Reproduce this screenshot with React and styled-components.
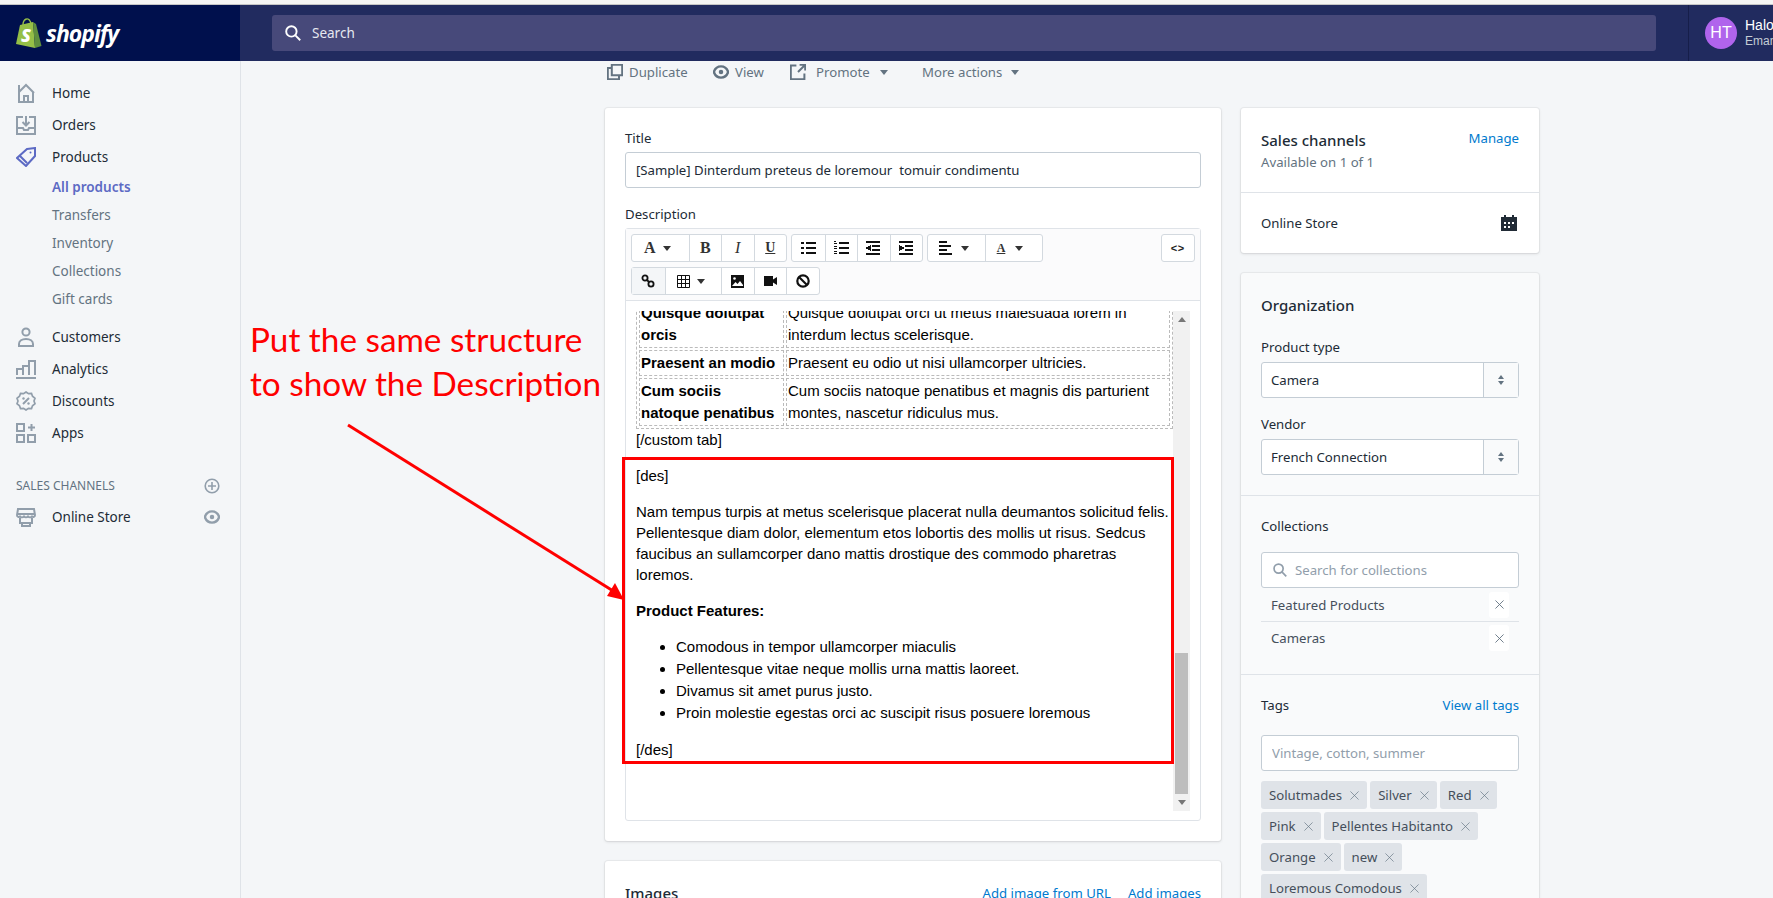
import React from "react";
import styled, { createGlobalStyle } from "styled-components";

const GlobalStyle = createGlobalStyle`
  html, body {
    margin: 0;
    padding: 0;
    height: 898px;
    overflow: hidden;
    background: #f4f6f8;
  }
  * { box-sizing: border-box; }
`;

const UI_FONT = `"Noto Sans", "Open Sans", sans-serif`;
const DOC_FONT = `"Liberation Sans", Arial, sans-serif`;

const Page = styled.div`
  position: relative;
  width: 1773px;
  height: 898px;
  overflow: hidden;
  font-family: ${UI_FONT};
  font-size: 13.5px;
  line-height: 20px;
  color: #212b36;
  background: #f4f6f8;
`;

const BrowserEdge = styled.div`
  height: 5px;
  background: #f5f5f5;
  border-bottom: 1px solid #c6c6c6;
`;

const TopBar = styled.header`
  display: flex;
  height: 56px;
  background: #212b5f;
`;

const LogoArea = styled.div`
  display: flex;
  flex: none;
  align-items: center;
  width: 240px;
  padding-left: 15px;
  background: #00104d;
`;

const Wordmark = styled.span`
  margin-left: 4px;
  font-family: "Open Sans", sans-serif;
  font-size: 23px;
  font-weight: 700;
  font-style: italic;
  letter-spacing: -1px;
  color: #fff;
`;

const SearchWrap = styled.div`
  display: flex;
  flex: none;
  align-items: center;
  gap: 11px;
  width: 1384px;
  height: 36px;
  margin: 10px 0 0 32px;
  padding-left: 13px;
  border-radius: 3px;
  background: #47497a;
  color: #e6e8f0;
`;

const SearchLabel = styled.span`
  font-size: 13.5px;
`;

const Account = styled.div`
  display: flex;
  flex: none;
  align-items: center;
  gap: 8px;
  margin-left: 32px;
  padding-left: 16px;
  border-left: 1px solid #161e4a;
  white-space: nowrap;
  font-family: ${DOC_FONT};
`;

const Avatar = styled.div`
  display: flex;
  align-items: center;
  justify-content: center;
  flex: none;
  width: 32px;
  height: 32px;
  border-radius: 50%;
  background: #b064ec;
  color: #fff;
  font-size: 16px;
`;

const AccountName = styled.div`
  font-size: 14px;
  line-height: 16px;
  color: #fff;
`;

const AccountShop = styled.div`
  font-size: 12px;
  line-height: 16px;
  color: #c4cdd5;
`;

const Body = styled.div`
  display: flex;
  height: 837px;
`;

const Sidebar = styled.nav`
  flex: none;
  width: 241px;
  padding-top: 16px;
  border-right: 1px solid #dfe3e8;
`;

const NavItem = styled.div`
  display: flex;
  align-items: center;
  gap: 16px;
  height: 32px;
  padding: 0 20px 0 16px;
  color: ${(p) => p.$color || "#212b36"};
`;

const NavLabel = styled.span`
  flex: 1;
  color: #212b36;
`;

const SubItem = styled.div`
  display: flex;
  align-items: center;
  height: 28px;
  padding-left: 52px;
  color: ${(p) => (p.$active ? "#5c6ac4" : "#637381")};
  font-weight: ${(p) => (p.$active ? 600 : 400)};
`;

const SubList = styled.div`
  padding-bottom: 8px;
`;

const NavHeading = styled.div`
  display: flex;
  align-items: center;
  justify-content: space-between;
  height: 24px;
  margin: 25px 0 3px;
  padding: 0 20px 0 16px;
  font-size: 12px;
  color: #637381;
  text-transform: uppercase;
`;

const Main = styled.main`
  flex: 1;
  padding-left: 364px;
  overflow: hidden;
  font-size: 13.2px;
`;

const Actions = styled.div`
  display: flex;
  align-items: center;
  height: 22px;
  margin: 0 0 25px 2px;
`;

const ActionItem = styled.span`
  display: inline-flex;
  align-items: center;
  gap: ${(p) => p.$gap || 6}px;
  width: ${(p) => p.$width}px;
  color: #637381;
`;

const Caret = styled.span`
  display: inline-block;
  width: 0;
  height: 0;
  margin-left: ${(p) => p.$gap ?? 6}px;
  border-left: 4.5px solid transparent;
  border-right: 4.5px solid transparent;
  border-top: 5px solid ${(p) => p.$color || "#637381"};
`;

const Columns = styled.div`
  display: flex;
  align-items: flex-start;
  gap: 20px;
`;

const LeftColumn = styled.div`
  display: flex;
  flex-direction: column;
  gap: 20px;
  width: 616px;
`;

const RightColumn = styled.div`
  display: flex;
  flex-direction: column;
  gap: 20px;
  width: 298px;
`;

const Card = styled.section`
  border-radius: 3px;
  background: ${(p) => (p.$tint ? "#f9fafb" : "#fff")};
  box-shadow: 0 0 0 1px rgba(63, 63, 68, 0.05), 0 1px 3px 0 rgba(63, 63, 68, 0.15);
`;

const CardSection = styled.div`
  padding: ${(p) => p.$padding || "20px"};
  & + & {
    border-top: 1px solid #dfe3e8;
  }
`;

const CardHead = styled.div`
  display: flex;
  align-items: ${(p) => p.$align || "center"};
  justify-content: space-between;
`;

const CardTitle = styled.h2`
  margin: 0;
  font-size: 15px;
  font-weight: 500;
  line-height: 24px;
  color: #212b36;
`;

const Muted = styled.div`
  line-height: 20px;
  color: #637381;
`;

const Link = styled.a`
  line-height: 20px;
  color: #007ace;
  margin-left: ${(p) => p.$gap || 0}px;
`;

const Label = styled.div`
  margin-top: ${(p) => p.$top || 0}px;
  margin-bottom: ${(p) => p.$gap ?? 4}px;
  line-height: 20px;
`;

const Input = styled.input`
  display: block;
  width: 100%;
  height: 36px;
  padding: 0 10px;
  border: 1px solid #c4cdd5;
  border-radius: 3px;
  background: #fff;
  font: inherit;
  color: #212b36;
  margin-top: ${(p) => p.$top || 0}px;
  margin-bottom: ${(p) => p.$gap || 0}px;
  &::placeholder {
    color: #919eab;
    opacity: 1;
  }
`;

const Editor = styled.div`
  border: 1px solid #dfe3e8;
  border-radius: 3px;
`;

const Toolbar = styled.div`
  display: flex;
  flex-direction: column;
  gap: 5px;
  padding: 5px;
  border-bottom: 1px solid #dfe3e8;
  background: #fbfbfc;
`;

const ToolRow = styled.div`
  display: flex;
  gap: 4px;
`;

const ToolGroup = styled.div`
  display: flex;
  border: 1px solid #d3d9df;
  border-radius: 3px;
  background: #fff;
  margin-left: ${(p) => (p.$end ? "auto" : 0)};
`;

const ToolButton = styled.div`
  display: flex;
  align-items: center;
  justify-content: center;
  gap: 7px;
  width: ${(p) => p.$width || 32.5}px;
  height: 26px;
  padding-right: ${(p) => p.$nudge || 0}px;
  color: #000;
  background: ${(p) => (p.$on ? "#f4f6f8" : "transparent")};
  & + & {
    border-left: 1px solid #d3d9df;
  }
`;

const SerifGlyph = styled.span`
  font-family: "Liberation Serif", serif;
  font-size: ${(p) => p.$size || 15}px;
  font-weight: ${(p) => (p.$light ? 400 : 700)};
  font-style: ${(p) => (p.$italic ? "italic" : "normal")};
  text-decoration: ${(p) => (p.$under ? "underline" : "none")};
  color: #333;
`;

const CodeGlyph = styled.span`
  font-family: ${DOC_FONT};
  font-size: 11px;
  font-weight: 700;
  letter-spacing: 0.5px;
  color: #222;
`;

const EditorFrame = styled.div`
  display: flex;
  height: 519px;
  padding: 10px 10px 9px;
`;

const Scroller = styled.div`
  flex: 1;
  overflow: hidden;
  font-family: ${DOC_FONT};
  font-size: 15px;
  line-height: 21px;
  color: #000;
`;

const ScrollContent = styled.div`
  margin-top: -14px;
`;

const DocTable = styled.table`
  width: 537px;
  border: 1px dashed #bbb;
  border-spacing: 2px;
  line-height: 22px;
  td {
    padding: 1px;
    border: 1px dashed #bbb;
    vertical-align: top;
  }
  td:first-child {
    width: 145px;
    font-weight: 700;
  }
`;

const DocText = styled.p`
  margin: 15px 0;
  &:last-child {
    margin-bottom: 0;
  }
`;

const DocList = styled.ul`
  margin: 15px 0;
  padding-left: 40px;
  line-height: 22px;
`;

const Scrollbar = styled.div`
  display: flex;
  flex: none;
  flex-direction: column;
  align-items: center;
  justify-content: space-between;
  width: 17px;
  background: #f1f1f1;
`;

const ScrollArrow = styled.div`
  display: flex;
  align-items: center;
  justify-content: center;
  height: 17px;
  &::before {
    content: "";
    border-left: 4px solid transparent;
    border-right: 4px solid transparent;
    ${(p) => (p.$down ? "border-top" : "border-bottom")}: 5px solid #777;
  }
`;

const ScrollBottom = styled.div`
  width: 100%;
`;

const ScrollThumb = styled.div`
  width: 13px;
  height: 141px;
  margin: 0 auto;
  background: #bdbdbd;
`;

const SelectBox = styled.div`
  display: flex;
  align-items: center;
  height: 36px;
  margin-bottom: ${(p) => p.$gap || 0}px;
  border: 1px solid #c4cdd5;
  border-radius: 3px;
  background: #fff;
`;

const SelectValue = styled.span`
  flex: 1;
  padding-left: 9px;
`;

const SelectHandle = styled.span`
  display: flex;
  flex-direction: column;
  align-items: center;
  justify-content: center;
  gap: 2px;
  width: 35px;
  height: 100%;
  border-left: 1px solid #c4cdd5;
  background: #f9fafb;
  &::before,
  &::after {
    content: "";
    border-left: 3px solid transparent;
    border-right: 3px solid transparent;
  }
  &::before {
    border-bottom: 4px solid #637381;
  }
  &::after {
    border-top: 4px solid #637381;
  }
`;

const SearchField = styled.div`
  display: flex;
  align-items: center;
  gap: 8px;
  height: 36px;
  padding-left: 11px;
  border: 1px solid #c4cdd5;
  border-radius: 3px;
  background: #fff;
  color: #919eab;
`;

const CollectionRow = styled.div`
  display: flex;
  align-items: center;
  justify-content: space-between;
  height: 33px;
  padding: 0 10px;
  color: #454f5b;
  & + & {
    border-top: 1px solid #dfe3e8;
  }
`;

const CollectionRemove = styled.span`
  display: flex;
  align-items: center;
  justify-content: center;
  width: 20px;
  height: 26px;
  border-radius: 3px;
  background: #fff;
  color: #637381;
`;

const TagWrap = styled.div`
  display: flex;
  flex-wrap: wrap;
  gap: 3px;
`;

const Tag = styled.span`
  display: inline-flex;
  align-items: center;
  gap: 8px;
  height: 28px;
  padding: 0 8px;
  border-radius: 3px;
  background: #dfe3e8;
  color: #454f5b;
`;

const Note = styled.div`
  position: absolute;
  left: 250px;
  top: 318px;
  font-family: Lato, sans-serif;
  font-size: 33.3px;
  line-height: 43.5px;
  color: #f00;
  white-space: nowrap;
`;

const RedBox = styled.div`
  position: absolute;
  left: 622px;
  top: 457px;
  width: 552px;
  height: 307px;
  border: 3px solid #f00;
`;

const ArrowLayer = styled.svg`
  position: absolute;
  left: 340px;
  top: 420px;
`;

const Icon = styled.svg.attrs((p) => ({
  viewBox: "0 0 20 20",
  width: p.$size || 20,
  height: p.$size || 20,
  fill: "none",
  stroke: "currentColor",
  strokeWidth: p.$stroke || 2,
}))`
  flex: none;
  display: block;
  color: ${(p) => p.$color || "#919eab"};
`;

const ShopifyBag = () => (
  <svg width="27" height="31" viewBox="0 0 27 31">
    <path d="M1 26 L5 7 L18 4 L20 30 Z" fill="#95bf47" />
    <path d="M18 4 L21 6 L26.5 28 L20 30 Z" fill="#5e8e3e" />
    <path d="M8 7 C8 1 13 -1 15 3 C16 4 16 5 16 7" fill="none" stroke="#95bf47" strokeWidth="1.4" />
    <text x="6" y="24" fontFamily="Open Sans, sans-serif" fontSize="18" fontWeight="800" fontStyle="italic" fill="#fff">
      S
    </text>
  </svg>
);

const HomeIcon = () => (
  <Icon>
    <path d="M3 9V2M3 9l7-7 8 8M3 9v10h14V9M8 19v-6h4v6" />
  </Icon>
);
const OrdersIcon = () => (
  <Icon>
    <path d="M7 2H1v17h18V2h-6M1 13h6l1 2h4l1-2h6M10 1v9M6.5 7l3.5 3.5L13.5 7" />
  </Icon>
);
const TagIcon = () => (
  <Icon $color="#5c6ac4">
    <path d="M11 2l8-1v8l-9 10-9-8zM4 9l7 7" />
    <circle cx="14.5" cy="5.5" r="1" fill="currentColor" stroke="none" />
  </Icon>
);
const CustomersIcon = () => (
  <Icon>
    <circle cx="10" cy="5" r="3.6" />
    <path d="M3 19v-2c0-3 3-5 7-5s7 2 7 5v2z" />
  </Icon>
);
const AnalyticsIcon = () => (
  <Icon>
    <path d="M1 16v-6h6v6M7 16V7h6v9M13 16V2h6v14M0 19h20" />
  </Icon>
);
const DiscountIcon = () => (
  <Icon>
    <path d="M10 1l2.5 1.7 3-.2 1 2.8 2.5 1.9-1 2.8 1 2.8-2.5 1.9-1 2.8-3-.2L10 19l-2.5-1.7-3 .2-1-2.8L1 12.8 2 10 1 7.2l2.5-1.9 1-2.8 3 .2z" strokeWidth="1.7" />
    <path d="M13 7l-6 6" />
    <circle cx="7.5" cy="7.5" r="1.2" fill="currentColor" stroke="none" />
    <circle cx="12.5" cy="12.5" r="1.2" fill="currentColor" stroke="none" />
  </Icon>
);
const AppsIcon = () => (
  <Icon>
    <path d="M1 1h7v7H1zM1 12h7v7H1zM12 12h7v7h-7zM15.5 1v7M12 4.5h7" />
  </Icon>
);
const StoreIcon = () => (
  <Icon>
    <path d="M2 2h16l1 6c0 2-2 2.5-3 1.5-1 1-3 1-4 0-1 1-3 1-4 0-1 1-3 1-4 0-1 1-3 .5-3-1.500zM4 11v5h12v-5M6 16v3h8v-3M1 7h18" />
  </Icon>
);
const PlusCircle = () => (
  <Icon $size={16}>
    <circle cx="10" cy="10" r="8.5" />
    <path d="M10 5v10M5 10h10" />
  </Icon>
);
const EyeBadge = ({ color }) => (
  <Icon $size={16} $color={color}>
    <path d="M10 3c5 0 8 4 9 7-1 3-4 7-9 7s-8-4-9-7c1-3 4-7 9-7z" strokeWidth="3" />
    <circle cx="10" cy="10" r="2.8" fill="currentColor" stroke="none" />
  </Icon>
);
const DuplicateIcon = () => (
  <Icon $size={16} $color="#637381" $stroke={2.5}>
    <path d="M6 1h13v13H6zM6 5H1v14h14v-5" />
  </Icon>
);
const PromoteIcon = () => (
  <Icon $size={16} $color="#637381" $stroke={2.5}>
    <path d="M8 2H1v17h17v-7M12 1h7v7M19 1l-9 9" />
  </Icon>
);
const SearchGlyph = ({ size = 16, color = "#fff" }) => (
  <Icon $size={size} $color={color} $stroke={2.4}>
    <circle cx="8" cy="8" r="6.5" />
    <path d="M13 13l6 6" />
  </Icon>
);
const CalendarIcon = () => (
  <svg width="16" height="16" viewBox="0 0 16 16">
    <path d="M0 2h3V0h2v2h6V0h2v2h3v14H0z" fill="#212b36" />
    <path d="M3 7h2v2H3zM7 7h2v2H7zM11 7h2v2h-2zM3 11h2v2H3zM7 11h2v2H7z" fill="#fff" />
  </svg>
);
const Cross = ({ size = 8, color = "#637381", weight = 2 }) => (
  <Icon $size={size} $color={color} $stroke={weight}>
    <path d="M1 1l18 18M19 1L1 19" />
  </Icon>
);

const Bars = ({ lines }) => (
  <svg width="15" height="14" viewBox="0 0 15 14">
    {lines.map(([x, y, w, h], i) => (
      <rect key={i} x={x} y={y} width={w} height={h} fill="#111" />
    ))}
  </svg>
);

const BULLETS = [
  [0, 1, 3, 2], [5, 1, 10, 2], [0, 6, 3, 2], [5, 6, 10, 2], [0, 11, 3, 2], [5, 11, 10, 2],
];
const NUMBERS = [
  [0, 0, 2, 1], [0, 2, 3, 1], [0, 5, 3, 1], [0, 7, 3, 1], [0, 10, 3, 1], [0, 12, 3, 1],
  [5, 1, 10, 2], [5, 6, 10, 2], [5, 11, 10, 2],
];
const OUTDENT = [
  [0, 0, 14, 2], [6, 4, 8, 2], [6, 8, 8, 2], [0, 12, 14, 2], [0, 6, 2, 2], [2, 5, 2, 4], [4, 4, 1, 6],
];
const INDENT = [
  [0, 0, 14, 2], [6, 4, 8, 2], [6, 8, 8, 2], [0, 12, 14, 2], [3, 6, 2, 2], [1, 5, 2, 4], [0, 4, 1, 6],
];
const ALIGN = [
  [0, 0, 8, 2], [0, 4, 12, 2], [0, 8, 8, 2], [0, 12, 13, 2],
];

const LinkGlyph = () => (
  <svg width="14" height="14" viewBox="0 0 14 14" fill="none" stroke="#111" strokeWidth="1.8">
    <circle cx="4" cy="4" r="2.6" />
    <circle cx="10" cy="10" r="2.6" />
    <path d="M6 6l2 2" />
  </svg>
);
const TableGlyph = () => (
  <svg width="13" height="13" viewBox="0 0 13 13" fill="none" stroke="#111" strokeWidth="1">
    <path d="M.5.5h12v12H.5zM.5 4.5h12M.5 8.5h12M4.5.5v12M8.5.5v12" />
  </svg>
);
const ImageGlyph = () => (
  <svg width="13" height="13" viewBox="0 0 13 13">
    <path d="M0 0h13v13H0z" fill="#111" />
    <path d="M1 11l3.5-4 2 2 2.5-3 3 4v1H1z" fill="#fff" />
    <circle cx="3.5" cy="3.5" r="1.3" fill="#fff" />
  </svg>
);
const VideoGlyph = () => (
  <svg width="13" height="10" viewBox="0 0 13 10">
    <path d="M0 0h9v10H0zM9 3.5L13 1v8L9 6.5z" fill="#111" />
  </svg>
);
const BanGlyph = () => (
  <svg width="14" height="14" viewBox="0 0 14 14" fill="none" stroke="#111" strokeWidth="2.2">
    <circle cx="7" cy="7" r="5.7" />
    <path d="M3 3l8 8" />
  </svg>
);

const TABLE_ROWS = [
  ["Quisque dolutpat orcis", "Quisque dolutpat orci ut metus malesuada lorem in interdum lectus scelerisque."],
  ["Praesent an modio", "Praesent eu odio ut nisi ullamcorper ultricies."],
  ["Cum sociis natoque penatibus", "Cum sociis natoque penatibus et magnis dis parturient montes, nascetur ridiculus mus."],
];

const FEATURES = [
  "Comodous in tempor ullamcorper miaculis",
  "Pellentesque vitae neque mollis urna mattis laoreet.",
  "Divamus sit amet purus justo.",
  "Proin molestie egestas orci ac suscipit risus posuere loremous",
];

const TAGS = [
  "Solutmades", "Silver", "Red", "Pink", "Pellentes Habitanto", "Orange", "new", "Loremous Comodous",
];

const MAIN_NAV = [
  ["Customers", CustomersIcon],
  ["Analytics", AnalyticsIcon],
  ["Discounts", DiscountIcon],
  ["Apps", AppsIcon],
];

const App = () => (
  <Page>
    <GlobalStyle />
    <BrowserEdge />
    <TopBar>
      <LogoArea>
        <ShopifyBag />
        <Wordmark>shopify</Wordmark>
      </LogoArea>
      <SearchWrap>
        <SearchGlyph />
        <SearchLabel>Search</SearchLabel>
      </SearchWrap>
      <Account>
        <Avatar>HT</Avatar>
        <div>
          <AccountName>Halo</AccountName>
          <AccountShop>Eman</AccountShop>
        </div>
      </Account>
    </TopBar>

    <Body>
      <Sidebar>
        <NavItem>
          <HomeIcon />
          <NavLabel>Home</NavLabel>
        </NavItem>
        <NavItem>
          <OrdersIcon />
          <NavLabel>Orders</NavLabel>
        </NavItem>
        <NavItem>
          <TagIcon />
          <NavLabel>Products</NavLabel>
        </NavItem>
        <SubList>
          <SubItem $active>All products</SubItem>
          <SubItem>Transfers</SubItem>
          <SubItem>Inventory</SubItem>
          <SubItem>Collections</SubItem>
          <SubItem>Gift cards</SubItem>
        </SubList>
        {MAIN_NAV.map(([label, NavIcon]) => (
          <NavItem key={label}>
            <NavIcon />
            <NavLabel>{label}</NavLabel>
          </NavItem>
        ))}
        <NavHeading>
          Sales channels
          <PlusCircle />
        </NavHeading>
        <NavItem>
          <StoreIcon />
          <NavLabel>Online Store</NavLabel>
          <EyeBadge />
        </NavItem>
      </Sidebar>

      <Main>
        <Actions>
          <ActionItem $width={106}>
            <DuplicateIcon />
            Duplicate
          </ActionItem>
          <ActionItem $width={77}>
            <EyeBadge color="#637381" />
            View
          </ActionItem>
          <ActionItem $width={132} $gap={10}>
            <PromoteIcon />
            Promote
            <Caret $gap={0} />
          </ActionItem>
          <ActionItem>
            More actions
            <Caret $gap={3} />
          </ActionItem>
        </Actions>

        <Columns>
          <LeftColumn>
            <Card>
              <CardSection>
                <Label>Title</Label>
                <Input $gap={16} defaultValue="[Sample] Dinterdum preteus de loremour  tomuir condimentu" />
                <Label>Description</Label>
                <Editor>
                  <Toolbar>
                    <ToolRow>
                      <ToolGroup>
                        <ToolButton $width={56.5} $nudge={6}>
                          <SerifGlyph $size={16}>A</SerifGlyph>
                          <Caret $gap={0} $color="#333" />
                        </ToolButton>
                        <ToolButton>
                          <SerifGlyph $size={16}>B</SerifGlyph>
                        </ToolButton>
                        <ToolButton>
                          <SerifGlyph $size={16} $italic $light>I</SerifGlyph>
                        </ToolButton>
                        <ToolButton>
                          <SerifGlyph $size={14} $under>U</SerifGlyph>
                        </ToolButton>
                      </ToolGroup>
                      <ToolGroup>
                        <ToolButton><Bars lines={BULLETS} /></ToolButton>
                        <ToolButton><Bars lines={NUMBERS} /></ToolButton>
                        <ToolButton><Bars lines={OUTDENT} /></ToolButton>
                        <ToolButton><Bars lines={INDENT} /></ToolButton>
                      </ToolGroup>
                      <ToolGroup>
                        <ToolButton $width={57} $nudge={6}>
                          <Bars lines={ALIGN} />
                          <Caret $gap={0} $color="#333" />
                        </ToolButton>
                        <ToolButton $width={57} $nudge={8}>
                          <SerifGlyph $size={12} $under>A</SerifGlyph>
                          <Caret $gap={3} $color="#333" />
                        </ToolButton>
                      </ToolGroup>
                      <ToolGroup $end>
                        <ToolButton><CodeGlyph>&lt;&gt;</CodeGlyph></ToolButton>
                      </ToolGroup>
                    </ToolRow>
                    <ToolRow>
                      <ToolGroup>
                        <ToolButton $on><LinkGlyph /></ToolButton>
                        <ToolButton $width={56.5} $nudge={5}>
                          <TableGlyph />
                          <Caret $gap={0} $color="#333" />
                        </ToolButton>
                        <ToolButton><ImageGlyph /></ToolButton>
                        <ToolButton><VideoGlyph /></ToolButton>
                        <ToolButton><BanGlyph /></ToolButton>
                      </ToolGroup>
                    </ToolRow>
                  </Toolbar>
                  <EditorFrame>
                    <Scroller>
                      <ScrollContent>
                        <DocTable>
                          <tbody>
                            {TABLE_ROWS.map(([name, text]) => (
                              <tr key={name}>
                                <td>{name}</td>
                                <td>{text}</td>
                              </tr>
                            ))}
                          </tbody>
                        </DocTable>
                        <div>[/custom tab]</div>
                        <DocText>[des]</DocText>
                        <DocText>
                          Nam tempus turpis at metus scelerisque placerat nulla deumantos solicitud felis.
                          <br />
                          Pellentesque diam dolor, elementum etos lobortis des mollis ut risus. Sedcus
                          <br />
                          faucibus an sullamcorper dano mattis drostique des commodo pharetras
                          <br />
                          loremos.
                        </DocText>
                        <DocText>
                          <strong>Product Features:</strong>
                        </DocText>
                        <DocList>
                          {FEATURES.map((item) => (
                            <li key={item}>{item}</li>
                          ))}
                        </DocList>
                        <DocText>[/des]</DocText>
                      </ScrollContent>
                    </Scroller>
                    <Scrollbar>
                      <ScrollArrow />
                      <ScrollBottom>
                        <ScrollThumb />
                        <ScrollArrow $down />
                      </ScrollBottom>
                    </Scrollbar>
                  </EditorFrame>
                </Editor>
              </CardSection>
            </Card>
            <Card>
              <CardSection>
                <CardHead>
                  <CardTitle>Images</CardTitle>
                  <div>
                    <Link>Add image from URL</Link>
                    <Link $gap={17}>Add images</Link>
                  </div>
                </CardHead>
              </CardSection>
            </Card>
          </LeftColumn>

          <RightColumn>
            <Card>
              <CardSection>
                <CardHead $align="flex-start">
                  <div>
                    <CardTitle>Sales channels</CardTitle>
                    <Muted>Available on 1 of 1</Muted>
                  </div>
                  <Link>Manage</Link>
                </CardHead>
              </CardSection>
              <CardSection $padding="20px 22px 20px 20px">
                <CardHead>
                  <span>Online Store</span>
                  <CalendarIcon />
                </CardHead>
              </CardSection>
            </Card>

            <Card $tint>
              <CardSection>
                <CardTitle>Organization</CardTitle>
                <Label $gap={5} $top={20}>Product type</Label>
                <SelectBox $gap={16}>
                  <SelectValue>Camera</SelectValue>
                  <SelectHandle />
                </SelectBox>
                <Label $gap={5}>Vendor</Label>
                <SelectBox>
                  <SelectValue>French Connection</SelectValue>
                  <SelectHandle />
                </SelectBox>
              </CardSection>
              <CardSection>
                <Label $gap={16}>Collections</Label>
                <SearchField>
                  <SearchGlyph size={14} color="#919eab" />
                  Search for collections
                </SearchField>
                <CollectionRow>
                  Featured Products
                  <CollectionRemove><Cross size={9} /></CollectionRemove>
                </CollectionRow>
                <CollectionRow>
                  Cameras
                  <CollectionRemove><Cross size={9} /></CollectionRemove>
                </CollectionRow>
              </CardSection>
              <CardSection>
                <CardHead>
                  <span>Tags</span>
                  <Link>View all tags</Link>
                </CardHead>
                <Input $gap={10} $top={20} placeholder="Vintage, cotton, summer" />
                <TagWrap>
                  {TAGS.map((tag) => (
                    <Tag key={tag}>
                      {tag}
                      <Cross size={9} weight={1.5} />
                    </Tag>
                  ))}
                </TagWrap>
              </CardSection>
            </Card>
          </RightColumn>
        </Columns>
      </Main>
    </Body>

    <Note>
      Put the same structure
      <br />
      to show the Description
    </Note>
    <RedBox />
    <ArrowLayer width="290" height="190" viewBox="0 0 290 190">
      <path d="M8 5L278 174" stroke="#f00" strokeWidth="3" fill="none" />
      <path d="M284 180L267 176L275 163z" fill="#f00" />
    </ArrowLayer>
  </Page>
);

export default App;
